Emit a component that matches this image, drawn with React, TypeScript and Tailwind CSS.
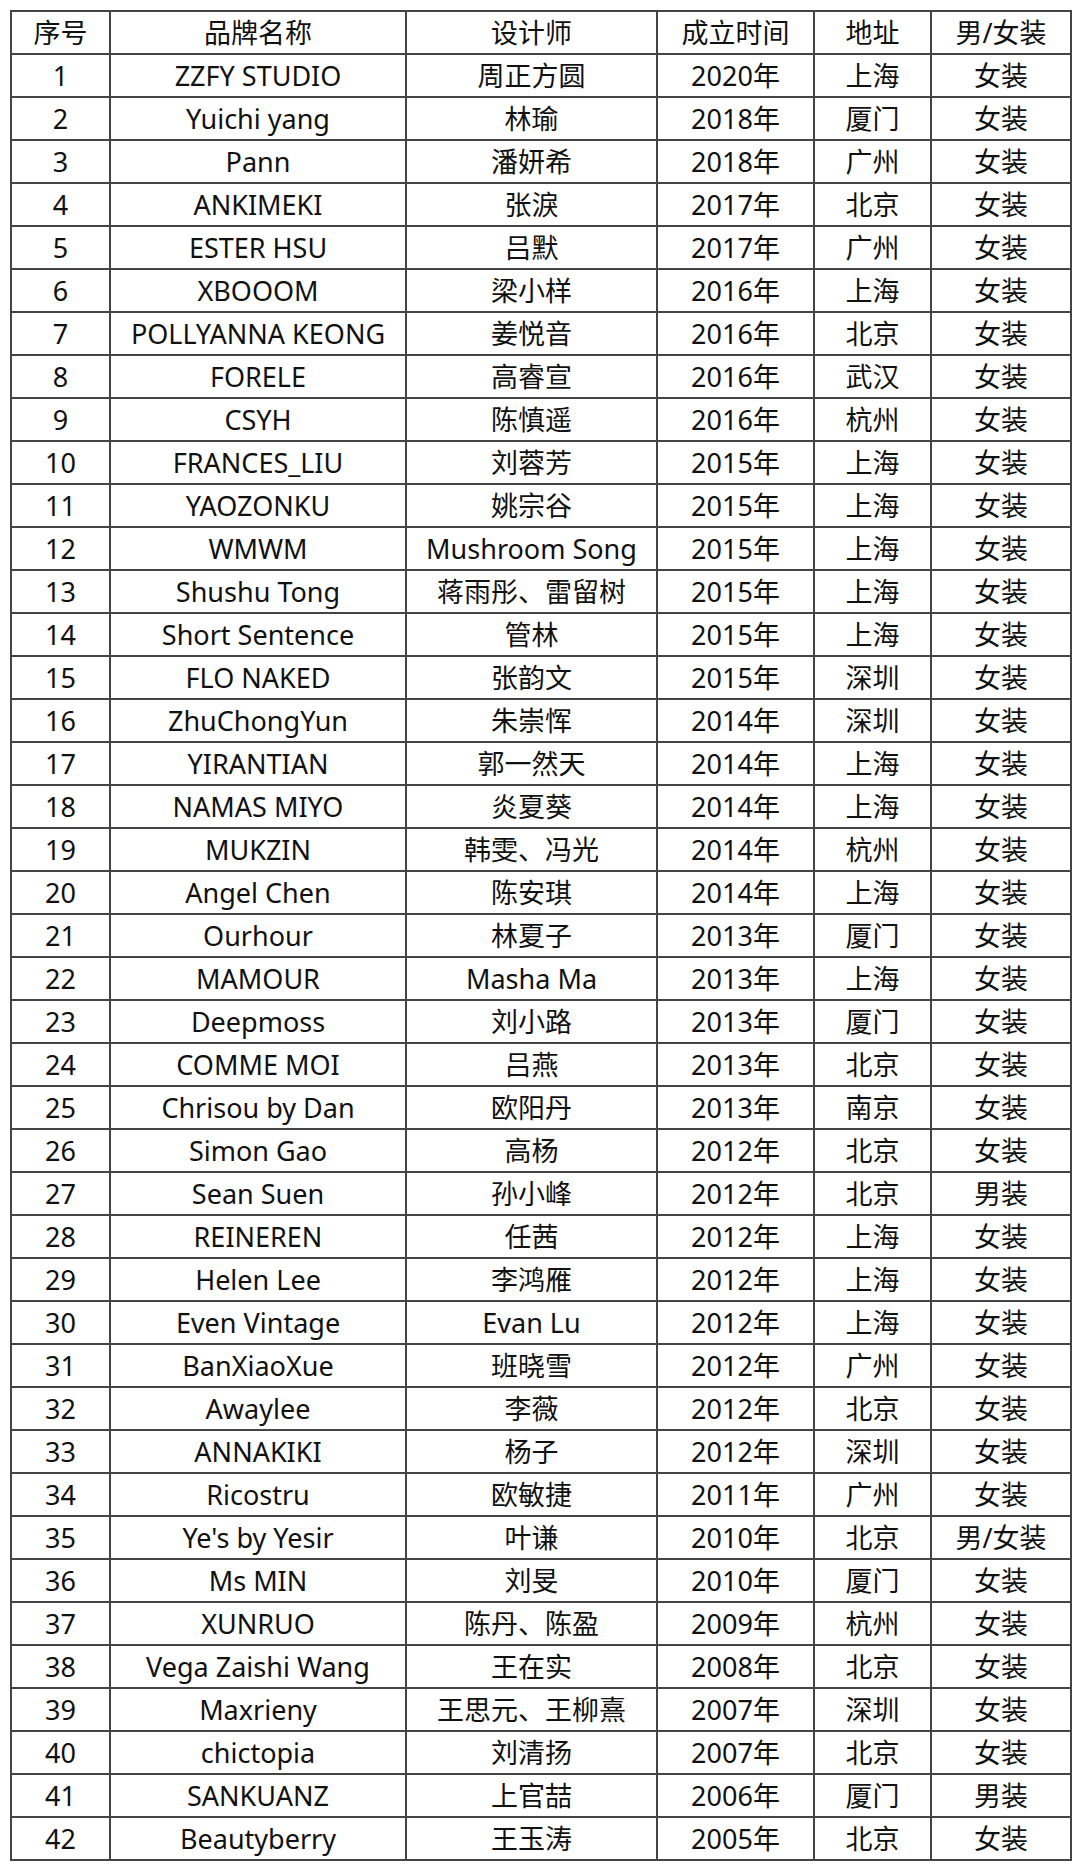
import React from "react";

const rows: [string, string, string, string, string][] = [
  ["ZZFY STUDIO", "周正方圆", "2020年", "上海", "女装"],
  ["Yuichi yang", "林瑜", "2018年", "厦门", "女装"],
  ["Pann", "潘妍希", "2018年", "广州", "女装"],
  ["ANKIMEKI", "张淚", "2017年", "北京", "女装"],
  ["ESTER HSU", "吕默", "2017年", "广州", "女装"],
  ["XBOOOM", "梁小样", "2016年", "上海", "女装"],
  ["POLLYANNA KEONG", "姜悦音", "2016年", "北京", "女装"],
  ["FORELE", "高睿宣", "2016年", "武汉", "女装"],
  ["CSYH", "陈慎遥", "2016年", "杭州", "女装"],
  ["FRANCES_LIU", "刘蓉芳", "2015年", "上海", "女装"],
  ["YAOZONKU", "姚宗谷", "2015年", "上海", "女装"],
  ["WMWM", "Mushroom Song", "2015年", "上海", "女装"],
  ["Shushu Tong", "蒋雨彤、雷留树", "2015年", "上海", "女装"],
  ["Short Sentence", "管林", "2015年", "上海", "女装"],
  ["FLO NAKED", "张韵文", "2015年", "深圳", "女装"],
  ["ZhuChongYun", "朱崇恽", "2014年", "深圳", "女装"],
  ["YIRANTIAN", "郭一然天", "2014年", "上海", "女装"],
  ["NAMAS MIYO", "炎夏葵", "2014年", "上海", "女装"],
  ["MUKZIN", "韩雯、冯光", "2014年", "杭州", "女装"],
  ["Angel Chen", "陈安琪", "2014年", "上海", "女装"],
  ["Ourhour", "林夏子", "2013年", "厦门", "女装"],
  ["MAMOUR", "Masha Ma", "2013年", "上海", "女装"],
  ["Deepmoss", "刘小路", "2013年", "厦门", "女装"],
  ["COMME MOI", "吕燕", "2013年", "北京", "女装"],
  ["Chrisou by Dan", "欧阳丹", "2013年", "南京", "女装"],
  ["Simon Gao", "高杨", "2012年", "北京", "女装"],
  ["Sean Suen", "孙小峰", "2012年", "北京", "男装"],
  ["REINEREN", "任茜", "2012年", "上海", "女装"],
  ["Helen Lee", "李鸿雁", "2012年", "上海", "女装"],
  ["Even Vintage", "Evan Lu", "2012年", "上海", "女装"],
  ["BanXiaoXue", "班晓雪", "2012年", "广州", "女装"],
  ["Awaylee", "李薇", "2012年", "北京", "女装"],
  ["ANNAKIKI", "杨子", "2012年", "深圳", "女装"],
  ["Ricostru", "欧敏捷", "2011年", "广州", "女装"],
  ["Ye's by Yesir", "叶谦", "2010年", "北京", "男/女装"],
  ["Ms MIN", "刘旻", "2010年", "厦门", "女装"],
  ["XUNRUO", "陈丹、陈盈", "2009年", "杭州", "女装"],
  ["Vega Zaishi Wang", "王在实", "2008年", "北京", "女装"],
  ["Maxrieny", "王思元、王柳熹", "2007年", "深圳", "女装"],
  ["chictopia", "刘清扬", "2007年", "北京", "女装"],
  ["SANKUANZ", "上官喆", "2006年", "厦门", "男装"],
  ["Beautyberry", "王玉涛", "2005年", "北京", "女装"],
];

const headers = ["序号", "品牌名称", "设计师", "成立时间", "地址", "男/女装"];

export default function App() {
  return (
    <div
      className="w-[1080px] h-[1870px] bg-white pt-[10px] pl-[10px]"
      style={{ fontFamily: '"Noto Sans", "Noto Sans CJK SC", sans-serif' }}
    >
      <table className="table-fixed border-collapse w-[1060px] text-[27px] text-[#111] leading-none">
        <colgroup>
          <col className="w-[99px]" />
          <col className="w-[296px]" />
          <col className="w-[251px]" />
          <col className="w-[157px]" />
          <col className="w-[117px]" />
          <col className="w-[140px]" />
        </colgroup>
        <thead>
          <tr className="h-[43px]">
            {headers.map((h) => (
              <th key={h} className="border-2 border-[#444] font-normal text-center p-0 whitespace-nowrap">
                {h}
              </th>
            ))}
          </tr>
        </thead>
        <tbody>
          {rows.map((r, i) => (
            <tr key={i} className="h-[43px]">
              <td className="border-2 border-[#444] text-center p-0">{i + 1}</td>
              {r.map((c, j) => (
                <td key={j} className="border-2 border-[#444] text-center p-0 whitespace-nowrap">
                  {c}
                </td>
              ))}
            </tr>
          ))}
        </tbody>
      </table>
    </div>
  );
}
